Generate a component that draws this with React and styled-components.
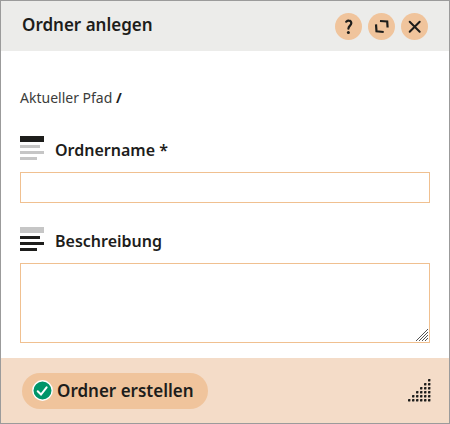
import { useState } from "react";
import styled, { createGlobalStyle } from "styled-components";

const GlobalStyle = createGlobalStyle`
  * {
    box-sizing: border-box;
  }
  body {
    margin: 0;
    background-color: #ffffff;
    color: #1d1d1b;
    font-family: "Noto Sans", sans-serif;
  }
`;

const Dialog = styled.form`
  border: 1px solid #9b9b9b;
  display: flex;
  flex-direction: column;
  min-height: 100vh;
`;

const Header = styled.header`
  display: flex;
  align-items: center;
  justify-content: space-between;
  height: 50px;
  padding: 0 21px;
  background-color: #ececea;
  h1 {
    margin: 0 0 2px;
    font-size: 17px;
    line-height: 24px;
    font-weight: 600;
  }
`;

const Actions = styled.div`
  display: flex;
  gap: 6px;
`;

const RoundButton = styled.button`
  display: flex;
  width: 27px;
  height: 27px;
  padding: 0;
  border: none;
  border-radius: 50%;
  background-color: #f0c49c;
  color: #1d1d1b;
  cursor: pointer;
`;

const Body = styled.main`
  flex: 1;
  padding: 37px 19px 15px;
`;

const Path = styled.p`
  margin: 0 0 28px;
  font-size: 14px;
  line-height: 20px;
  color: #3c3c3b;
  strong {
    font-weight: 700;
    color: #1d1d1b;
  }
`;

const Field = styled.div`
  display: flex;
  flex-direction: column;
  gap: 12px;
  & + & {
    margin-top: 24px;
  }
  label {
    display: flex;
    align-items: flex-start;
    gap: 11px;
    height: 24px;
    font-size: 16px;
    line-height: 28px;
    font-weight: 600;
  }
  input,
  textarea {
    display: block;
    width: 100%;
    margin: 0;
    padding: 4px 8px;
    border: 1px solid #f0c090;
    border-radius: 0;
    background-color: #ffffff;
    font: inherit;
    font-size: 14px;
    outline: none;
  }
  input {
    height: 31px;
  }
  textarea {
    height: 80px;
    resize: none;
  }
`;

const AreaWrap = styled.div`
  position: relative;
  svg {
    position: absolute;
    right: 2px;
    bottom: 2px;
    pointer-events: none;
  }
`;

const Footer = styled.footer`
  display: flex;
  align-items: center;
  justify-content: space-between;
  height: 65px;
  padding: 0 18px 0 21px;
  background-color: #f4dcc8;
`;

const SubmitButton = styled.button`
  display: flex;
  align-items: center;
  gap: 4px;
  height: 36px;
  padding: 0 14px 0 10px;
  border: none;
  border-radius: 18px;
  background-color: #f0c49c;
  color: #1d1d1b;
  font-family: inherit;
  font-size: 17px;
  font-weight: 600;
  cursor: pointer;
`;

const HelpIcon = () => (
  <svg width="27" height="27" fill="none" stroke="currentColor" strokeWidth="2.2">
    <path
      d="M11.2 8.7c.9-.8 1.7-1.1 2.7-1 1.7.1 2.5 1.2 2.4 2.6-.1 2.3-2.9 2.5-2.9 5.4"
      strokeLinecap="round"
    />
    <circle cx="13.4" cy="19.5" r="1.5" fill="currentColor" stroke="none" />
  </svg>
);

const ExpandIcon = () => (
  <svg width="27" height="27" fill="none" stroke="currentColor" strokeWidth="2.2">
    <path d="M12 8l7.2.5.4 6M8 11.4l.5 6.9 7.2.7" />
  </svg>
);

const CloseIcon = () => (
  <svg width="27" height="27" fill="none" stroke="currentColor" strokeWidth="2">
    <path d="M8.7 8.7l10 10M18.7 8.7l-10 10" strokeLinecap="round" />
  </svg>
);

const LinesIcon = ({ head, lines }) => (
  <svg width="24" height="24">
    <path fill={head} d="M0 0h24v6H0z" />
    <path fill={lines} d="M0 9h20v3H0zM0 15h24v3H0zM0 21h17v3H0z" />
  </svg>
);

const CheckIcon = () => (
  <svg width="21" height="21" fill="none">
    <circle cx="10.5" cy="10.5" r="9.7" fill="#009569" stroke="#fff" strokeWidth="1.4" />
    <path
      d="M5.7 11.2l3.3 3.3 5.6-7.2"
      stroke="#fff"
      strokeWidth="2"
      strokeLinecap="round"
    />
  </svg>
);

const ResizeLines = () => (
  <svg width="12" height="12" stroke="#555" strokeWidth="1">
    <path d="M0 12L12 0M3 12l9-9M6 12l6-6M9 12l3-3" />
  </svg>
);

const DotGrip = () => (
  <svg width="23" height="23" fill="#1d1d1b">
    {[0, 1, 2, 3, 4, 5].map((row) =>
      [0, 1, 2, 3, 4, 5]
        .filter((col) => col >= 5 - row)
        .map((col) => (
          <rect
            key={`${row}-${col}`}
            x={col * 4}
            y={row * 4}
            width="2.4"
            height="2.4"
            rx="0.4"
          />
        ))
    )}
  </svg>
);

const App = () => {
  const [name, setName] = useState("");
  const [description, setDescription] = useState("");
  return (
    <>
      <GlobalStyle />
      <Dialog onSubmit={(e) => e.preventDefault()}>
        <Header>
          <h1>Ordner anlegen</h1>
          <Actions>
            <RoundButton type="button" aria-label="Hilfe">
              <HelpIcon />
            </RoundButton>
            <RoundButton type="button" aria-label="Maximieren">
              <ExpandIcon />
            </RoundButton>
            <RoundButton type="button" aria-label="Schließen">
              <CloseIcon />
            </RoundButton>
          </Actions>
        </Header>
        <Body>
          <Path>
            Aktueller Pfad <strong>/</strong>
          </Path>
          <Field>
            <label htmlFor="name">
              <LinesIcon head="#1d1d1b" lines="#c6c6c6" />
              Ordnername *
            </label>
            <input
              id="name"
              type="text"
              value={name}
              onChange={(e) => setName(e.target.value)}
            />
          </Field>
          <Field>
            <label htmlFor="description">
              <LinesIcon head="#c6c6c6" lines="#1d1d1b" />
              Beschreibung
            </label>
            <AreaWrap>
              <textarea
                id="description"
                value={description}
                onChange={(e) => setDescription(e.target.value)}
              />
              <ResizeLines />
            </AreaWrap>
          </Field>
        </Body>
        <Footer>
          <SubmitButton type="submit">
            <CheckIcon />
            Ordner erstellen
          </SubmitButton>
          <DotGrip />
        </Footer>
      </Dialog>
    </>
  );
};

export default App;
